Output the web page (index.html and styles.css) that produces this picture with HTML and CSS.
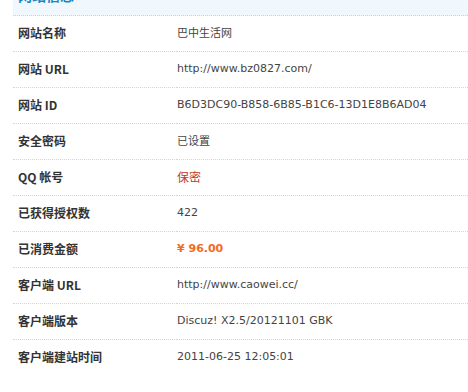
FILE: index.html
```html
<!DOCTYPE html>
<html>
<head>
<meta charset="utf-8">
<link rel="stylesheet" href="styles.css">
</head>
<body>
<div class="panel">
  <div class="panel-head">网站信息</div>
  <table class="info">
    <tr><th>网站名称</th><td>巴中生活网</td></tr>
    <tr><th>网站 URL</th><td>http://www.bz0827.com/</td></tr>
    <tr><th>网站 ID</th><td>B6D3DC90-B858-6B85-B1C6-13D1E8B6AD04</td></tr>
    <tr><th>安全密码</th><td>已设置</td></tr>
    <tr><th>QQ 帐号</th><td class="secret">保密</td></tr>
    <tr><th>已获得授权数</th><td>422</td></tr>
    <tr><th>已消费金额</th><td class="money">¥ 96.00</td></tr>
    <tr><th>客户端 URL</th><td>http://www.caowei.cc/</td></tr>
    <tr><th>客户端版本</th><td>Discuz! X2.5/20121101 GBK</td></tr>
    <tr><th>客户端建站时间</th><td>2011-06-25 12:05:01</td></tr>
  </table>
</div>
</body>
</html>
```
FILE: styles.css
```css
html, body {
  margin: 0;
  padding: 0;
  background: #fff;
}
body {
  font-family: "DejaVu Sans", "Noto Sans CJK SC", sans-serif;
  font-size: 11px;
  color: #333;
}
.panel {
  margin: -22px 0 0 13px;
}
.panel-head {
  height: 34px;
  line-height: 34px;
  padding: 0 0 3px 5px;
  background: #f0f7fd;
  border-bottom: 1px dotted #c9d3dc;
  color: #1a87c4;
  font-weight: bold;
  font-size: 14px;
  font-family: "Noto Sans CJK SC", sans-serif;
}
.info {
  width: 100%;
  border-collapse: collapse;
}
.info th, .info td {
  height: 32px;
  padding: 0 0 3px 0;
  border-bottom: 1px dotted #d4d4d4;
  vertical-align: middle;
  text-align: left;
}
.info th {
  width: 159px;
  padding-left: 5px;
  font-family: "Noto Sans CJK SC", sans-serif;
  font-weight: bold;
  font-size: 12px;
  color: #333;
}
.info td {
  color: #444;
}
.info tr:last-child th, .info tr:last-child td {
  border-bottom: none;
}
.secret {
  font-family: "Noto Sans CJK SC", sans-serif;
  font-size: 12px;
  color: #c0392b !important;
}
.money {
  color: #f26c1f !important;
  font-weight: bold;
}
```
